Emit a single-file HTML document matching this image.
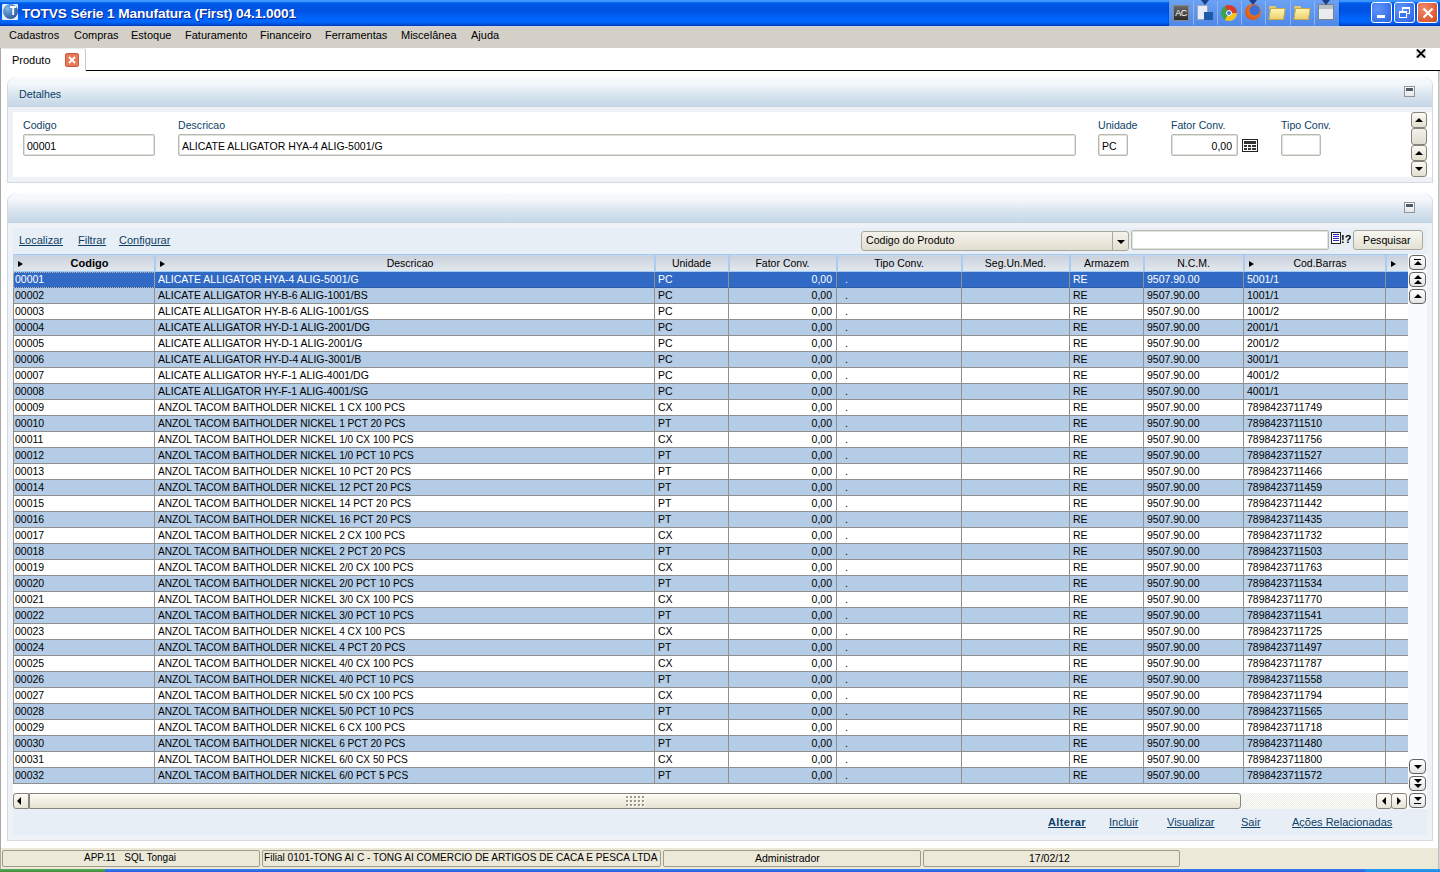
<!DOCTYPE html>
<html><head><meta charset="utf-8">
<style>
*{box-sizing:border-box;margin:0;padding:0}
html,body{width:1440px;height:872px;overflow:hidden;background:#fff;font-family:"Liberation Sans",sans-serif;font-size:11px;color:#000;position:relative}
.a{position:absolute}
/* title bar */
#title{left:0;top:0;width:1440px;height:26px;background:linear-gradient(to bottom,#3D95FF 0px,#3D95FF 1.5px,#0A6CF5 2.5px,#0058E6 4px,#0054E3 8px,#0055E5 12px,#005DF0 15px,#0066FF 19px,#0066FE 22px,#0052DA 24px,#003CB5 26px)}
#title .t{left:22px;top:6px;color:#fff;font-weight:bold;font-size:13.7px;letter-spacing:-0.12px;text-shadow:1px 1px 0 #0A1E8C;white-space:nowrap}
#menuline{left:0;top:26px;width:1440px;height:1px;background:#C9D2EA}
#menu{left:0;top:27px;width:1440px;height:21px;background:#D4D0C8}
#menu span{position:absolute;top:2px;white-space:nowrap;font-size:11px}
/* tab */
#tabbar{left:0;top:48px;width:1440px;height:23px;background:#fff}
#tabline{left:86px;top:70px;width:1354px;height:1px;background:#000}
#tab{left:1px;top:48px;width:85px;height:23px;background:#fff;border-top:1px solid #E8E8E8;border-right:1px solid #C8C8C8;border-top-right-radius:3px}
#lborder{left:0;top:48px;width:1px;height:821px;background:#A9A9A9}
#rborder{left:1438px;top:71px;width:2px;height:798px;background:linear-gradient(to right,#B4B4B4,#DCDCDC)}
.panel{background:#EEF2F7;border:1px solid #D3DAE2;border-top:none;border-radius:9px 9px 0 0}
.phead{left:0;top:0;right:0;height:30px;border-radius:9px 9px 0 0;background:linear-gradient(to bottom,#F9FBFD 0%,#F2F6FA 25%,#D8E4EF 60%,#C4D6E6 100%)}
.minbtn{width:11px;height:11px;border:1px solid #8E959C;background:linear-gradient(#FDFDFD,#E4E6E9)}
.minbtn::after{content:"";position:absolute;left:1px;top:1px;width:7px;height:2.5px;background:#505A68}
.lbl{color:#0D3F66;font-size:10.6px;white-space:nowrap}
.inp{background:#fff;border:1px solid #B9B9B3;border-radius:2px;box-shadow:inset 0 0 0 1px #E2E2DC}
.inp span{position:absolute;top:4.5px;white-space:nowrap;font-size:10.5px}
.gbtn{position:absolute;width:17px;height:15px;border:1px solid #626262;border-radius:4px;background:linear-gradient(#FFFFFF,#E4E4E4)}
.sbtn{width:16px;border:1px solid #85847C;border-radius:3px;background:linear-gradient(#FBFAF4,#E3E0D0)}
.tri-up{position:absolute;width:0;height:0;border-left:4px solid transparent;border-right:4px solid transparent;border-bottom:4px solid #000}
.tri-dn{position:absolute;width:0;height:0;border-left:4px solid transparent;border-right:4px solid transparent;border-top:4px solid #000}
.tri-l{position:absolute;width:0;height:0;border-top:4px solid transparent;border-bottom:4px solid transparent;border-right:4px solid #000}
.tri-r{position:absolute;width:0;height:0;border-top:4px solid transparent;border-bottom:4px solid transparent;border-left:4px solid #000}
.bar{position:absolute;height:2px;background:#000}
.link{color:#0D3F66;text-decoration:underline;white-space:nowrap;font-size:11px}
/* grid */
#gridhead{left:13px;top:254px;width:1395px;height:18px;border-top:1px solid #A9C6E4;border-bottom:1px solid #ABCBEC;border-left:1px solid #B8D6F0;background:linear-gradient(to bottom,#C0D8F0 0,#C0D8F0 1px,#CAD2DD 1px,#E2E6EC 15px,#D4EAFB 15px)}
.hcell{position:absolute;top:257px;height:14px;text-align:center;white-space:nowrap;font-size:10.5px}
.hcell.b{font-weight:bold;font-size:11px}
.harrow{position:absolute;top:261px;width:0;height:0;border-top:3.5px solid transparent;border-bottom:3.5px solid transparent;border-left:5px solid #000}
.hsep{position:absolute;top:255px;width:2px;height:16px;background:#A8CDF3}
#gridbody{left:13px;top:272px;width:1394px;height:521px;background:#fff}
.row{position:absolute;left:13px;width:1395px;height:16px;border-bottom:1px solid #8F8F8F;font-size:10.5px}
.row span{position:absolute;top:1px;white-space:nowrap}
.row span.r{text-align:right}
.row.alt{background:#B4CCE6}
.row.wht{background:#fff}
.row.sel{background:#316AC5;color:#fff;border-bottom-color:#2B5AA6}
.vline{position:absolute;width:1px;background:#8F8F8F}
.status{position:absolute;top:850px;height:17px;border:1px solid #A09C8C;border-radius:2px;background:#ECE9D8;font-size:10.5px;white-space:nowrap}
.status span{position:absolute;top:1px}
</style></head><body>

<!-- Title bar -->
<div id="title" class="a">
  <div class="a" style="left:2px;top:4px;width:16px;height:16px;background:#E6EEFA;border-radius:1px"></div>
  <div class="a" style="left:3px;top:4px;width:15px;height:15px;border-radius:50%;background:radial-gradient(circle at 30% 30%,#7DB8E8 0%,#4A80C0 45%,#24407E 100%)"></div>
  <svg class="a" style="left:9px;top:5px" width="8" height="11"><path d="M1 2H7M4.2 2V10" stroke="#fff" stroke-width="1.8"/></svg>
  <div class="a t">TOTVS Série 1 Manufatura (First) 04.1.0001</div>
  <!-- quick launch -->
  <div class="a" style="left:1169px;top:0;width:170px;height:26px;background:linear-gradient(#6CA2F4,#4F87E6);box-shadow:0 1px 2px rgba(0,0,0,.3)"></div>
  <div class="a" style="left:1193px;top:1px;width:1px;height:24px;background:#8FB4F2"></div>
<div class="a" style="left:1217px;top:1px;width:1px;height:24px;background:#8FB4F2"></div>
<div class="a" style="left:1241px;top:1px;width:1px;height:24px;background:#8FB4F2"></div>
<div class="a" style="left:1265px;top:1px;width:1px;height:24px;background:#8FB4F2"></div>
<div class="a" style="left:1290px;top:1px;width:1px;height:24px;background:#8FB4F2"></div>
<div class="a" style="left:1314px;top:1px;width:1px;height:24px;background:#8FB4F2"></div>
<div class="a" style="left:1173px;top:5px;width:16px;height:16px;background:linear-gradient(#6A6A6A,#2A2A2A);border:1px solid #888;color:#fff;font-size:9px;line-height:14px;text-align:center;letter-spacing:-0.5px">AC</div>
<div class="a" style="left:1197px;top:5px;width:11px;height:15px;background:#E8ECF4;border:1px solid #A0A8B8"></div><div class="a" style="left:1204px;top:12px;width:9px;height:8px;background:#1D5BA8"></div>
<div class="a" style="left:1221px;top:5px;width:16px;height:16px;border-radius:50%;background:conic-gradient(from -30deg,#DB3A2C 0 120deg,#F6C21C 120deg 240deg,#3DA24A 240deg 360deg)"></div><div class="a" style="left:1226px;top:10px;width:6px;height:6px;border-radius:50%;background:#3A7BE0;border:1px solid #fff"></div>
<div class="a" style="left:1245px;top:4px;width:16px;height:16px;border-radius:50%;background:radial-gradient(circle at 60% 40%,#3A6ED8 0 35%,#E8701E 40%,#C8401A 100%)"></div>
<div class="a" style="left:1269px;top:6px;width:7px;height:3px;background:#E8C860;border-radius:1px 1px 0 0"></div><div class="a" style="left:1269px;top:8px;width:16px;height:12px;background:linear-gradient(#FFF4B0,#EDD070);border:1px solid #C8A848;border-radius:1px;transform:skewX(-8deg)"></div>
<div class="a" style="left:1294px;top:6px;width:7px;height:3px;background:#E8C860;border-radius:1px 1px 0 0"></div><div class="a" style="left:1294px;top:8px;width:16px;height:12px;background:linear-gradient(#FFF4B0,#EDD070);border:1px solid #C8A848;border-radius:1px;transform:skewX(-8deg)"></div>
<div class="a" style="left:1318px;top:4px;width:16px;height:16px;background:linear-gradient(#B8C0C8 0 30%,#E8ECEF 30%);border:1px solid #7A8490"></div>
<div class="a" style="left:1201px;top:0;width:0;height:0;border-left:4px solid transparent;border-right:4px solid transparent;border-top:5px solid #1E3E88"></div>
<div class="a" style="left:1249px;top:0;width:0;height:0;border-left:4px solid transparent;border-right:4px solid transparent;border-top:5px solid #1E3E88"></div>
<div class="a" style="left:1322px;top:0;width:0;height:0;border-left:4px solid transparent;border-right:4px solid transparent;border-top:5px solid #1E3E88"></div>
  <!-- window buttons -->
  <div class="a" style="left:1371px;top:2px;width:21px;height:21px;border:1px solid #fff;border-radius:3px;background:radial-gradient(circle at 30% 30%,#5E94FA,#2A62E2)"><div class="a" style="left:5px;top:12px;width:8px;height:3px;background:#fff"></div></div>
  <div class="a" style="left:1394px;top:2px;width:21px;height:21px;border:1px solid #fff;border-radius:3px;background:radial-gradient(circle at 30% 30%,#5E94FA,#2A62E2)"><div class="a" style="left:7px;top:4px;width:8px;height:7px;border:1px solid #fff;border-top-width:2px"></div><div class="a" style="left:4px;top:8px;width:8px;height:7px;border:1px solid #fff;border-top-width:2px;background:#3D74EA"></div></div>
  <div class="a" style="left:1417px;top:2px;width:21px;height:21px;border:1px solid #fff;border-radius:3px;background:radial-gradient(circle at 30% 30%,#F08A6A,#D2471F)"><svg class="a" style="left:4px;top:4px" width="12" height="12"><path d="M1.5 1.5L10.5 10.5M10.5 1.5L1.5 10.5" stroke="#fff" stroke-width="2.2"/></svg></div>
</div>
<div id="menuline" class="a"></div>
<div id="menu" class="a">
  <span style="left:9px">Cadastros</span>
  <span style="left:74px">Compras</span>
  <span style="left:131px">Estoque</span>
  <span style="left:185px">Faturamento</span>
  <span style="left:260px">Financeiro</span>
  <span style="left:325px">Ferramentas</span>
  <span style="left:401px">Miscelânea</span>
  <span style="left:471px">Ajuda</span>
</div>

<!-- tab -->
<div id="tabbar" class="a"></div>
<div id="tab" class="a">
  <div class="a" style="left:11px;top:5px;font-size:11px">Produto</div>
  <div class="a" style="left:64px;top:4px;width:14px;height:14px;border:1px solid #C85A3A;border-radius:2px;background:#E8785A"><svg class="a" style="left:2px;top:2px" width="8" height="8"><path d="M1 1L7 7M7 1L1 7" stroke="#fff" stroke-width="1.8"/></svg></div>
</div>
<div id="tabline" class="a"></div>
<div class="a" style="left:0;top:70px;width:1px;height:1px;background:#000"></div>
<svg class="a" style="left:1416px;top:49px" width="10" height="9"><rect x="0" y="0" width="10" height="9" fill="#E4E4E4"/><path d="M1 0.5L9 8.5M9 0.5L1 8.5" stroke="#000" stroke-width="1.8"/></svg>
<div id="lborder" class="a"></div>
<div id="rborder" class="a"></div>

<!-- Detalhes panel -->
<div class="a panel" style="left:7px;top:77px;width:1426px;height:106px">
  <div class="a phead"></div>
  <div class="a lbl" style="left:11px;top:11px;font-size:10.7px">Detalhes</div>
  <div class="a minbtn" style="left:1396px;top:9px"></div>
  <div class="a" style="left:5px;top:35px;width:1419px;height:65px;background:#fff"></div>
</div>
<div class="a lbl" style="left:23px;top:119px">Codigo</div>
<div class="a lbl" style="left:178px;top:119px">Descricao</div>
<div class="a lbl" style="left:1098px;top:119px">Unidade</div>
<div class="a lbl" style="left:1171px;top:119px">Fator Conv.</div>
<div class="a lbl" style="left:1281px;top:119px">Tipo Conv.</div>
<div class="a inp" style="left:23px;top:134px;width:132px;height:22px"><span style="left:3px">00001</span></div>
<div class="a inp" style="left:178px;top:134px;width:898px;height:22px"><span style="left:3px">ALICATE ALLIGATOR HYA-4 ALIG-5001/G</span></div>
<div class="a inp" style="left:1098px;top:134px;width:30px;height:22px"><span style="left:3px">PC</span></div>
<div class="a inp" style="left:1171px;top:134px;width:67px;height:22px"><span style="right:5px">0,00</span></div>
<div class="a inp" style="left:1281px;top:134px;width:40px;height:22px"></div>
<!-- calculator icon -->
<svg class="a" style="left:1242px;top:139px" width="16" height="13"><rect x="0.5" y="0.5" width="15" height="12" fill="#fff" stroke="#222"/><rect x="2" y="2" width="12" height="3" fill="#333"/><g fill="#333"><rect x="2" y="6" width="3" height="2"/><rect x="6" y="6" width="3" height="2"/><rect x="10" y="6" width="4" height="2"/><rect x="2" y="9" width="3" height="2"/><rect x="6" y="9" width="3" height="2"/><rect x="10" y="9" width="4" height="2"/></g></svg>
<!-- detalhes scroll -->
<div class="a sbtn" style="left:1411px;top:112px;height:16px"><div class="tri-up" style="left:3px;top:5px"></div></div>
<div class="a sbtn" style="left:1411px;top:128px;height:17px;background:linear-gradient(#F2F0E8,#E0DED4)"></div>
<div class="a sbtn" style="left:1411px;top:145px;height:16px"><div class="tri-up" style="left:3px;top:5px"></div></div>
<div class="a sbtn" style="left:1411px;top:161px;height:16px"><div class="tri-dn" style="left:3px;top:5px"></div></div>

<!-- Grid panel -->
<div class="a panel" style="left:7px;top:193px;width:1426px;height:648px">
  <div class="a phead"></div>
  <div class="a minbtn" style="left:1396px;top:9px"></div>
  <div class="a" style="left:5px;top:35px;width:1414px;height:607px;background:#E8EEF6"></div>
</div>
<div class="a link" style="left:19px;top:234px">Localizar</div>
<div class="a link" style="left:78px;top:234px">Filtrar</div>
<div class="a link" style="left:119px;top:234px">Configurar</div>
<!-- combo -->
<div class="a" style="left:861px;top:231px;width:268px;height:20px;border:1px solid #A9A79C;border-radius:3px;background:linear-gradient(#F4F2EA,#E2DFD0)">
  <div class="a" style="left:4px;top:2px;font-size:10.6px;white-space:nowrap">Codigo do Produto</div>
  <div class="a" style="left:250px;top:0;width:1px;height:18px;background:#A9A79C"></div>
  <div class="tri-dn" style="left:255px;top:8px"></div>
</div>
<div class="a inp" style="left:1131px;top:230px;width:198px;height:20px"></div>
<!-- search icon -->
<svg class="a" style="left:1331px;top:232px" width="20" height="13" shape-rendering="crispEdges"><rect x="0.5" y="0.5" width="9" height="11" fill="#fff" stroke="#222"/><g stroke="#2828C8"><path d="M2 2.5H8M2 4.5H8M2 6.5H8M2 8.5H8"/></g><text x="10" y="11" font-family="Liberation Sans" font-weight="bold" font-size="11" fill="#000">!?</text></svg>
<div class="a" style="left:1353px;top:230px;width:70px;height:20px;border:1px solid #A9A79C;border-radius:3px;background:linear-gradient(#F7F6F0,#E4E1D3)"><div class="a" style="left:9px;top:3px;font-size:10.7px">Pesquisar</div></div>

<!-- grid -->
<div class="a" style="left:1407px;top:254px;width:20px;height:555px;background:#FAFBFD"></div>
<div id="gridbody" class="a"></div>
<div id="gridhead" class="a"></div>
<div class="hcell b" style="left:25px;width:129px">Codigo</div>
<div class="hcell" style="left:166px;width:488px">Descricao</div>
<div class="hcell" style="left:655px;width:73px">Unidade</div>
<div class="hcell" style="left:729px;width:107px">Fator Conv.</div>
<div class="hcell" style="left:837px;width:124px">Tipo Conv.</div>
<div class="hcell" style="left:962px;width:107px">Seg.Un.Med.</div>
<div class="hcell" style="left:1070px;width:73px">Armazem</div>
<div class="hcell" style="left:1144px;width:99px">N.C.M.</div>
<div class="hcell" style="left:1255px;width:130px">Cod.Barras</div>
<div class="hcell" style="left:1386px;width:21px"></div>
<div class="harrow" style="left:18px"></div>
<div class="harrow" style="left:160px"></div>
<div class="harrow" style="left:1249px"></div>
<div class="harrow" style="left:1391px"></div>
<div class="hsep" style="left:154px"></div>
<div class="hsep" style="left:654px"></div>
<div class="hsep" style="left:728px"></div>
<div class="hsep" style="left:836px"></div>
<div class="hsep" style="left:961px"></div>
<div class="hsep" style="left:1069px"></div>
<div class="hsep" style="left:1143px"></div>
<div class="hsep" style="left:1243px"></div>
<div class="hsep" style="left:1385px"></div>
<div class="row sel" style="top:272px"><span style="left:2px">00001</span><span style="left:145px">ALICATE ALLIGATOR HYA-4 ALIG-5001/G</span><span style="left:645px">PC</span><span class="r" style="left:716px;width:103px">0,00</span><span style="left:832px">.</span><span style="left:1060px">RE</span><span style="left:1134px">9507.90.00</span><span style="left:1234px">5001/1</span></div>
<div class="row alt" style="top:288px"><span style="left:2px">00002</span><span style="left:145px">ALICATE ALLIGATOR HY-B-6 ALIG-1001/BS</span><span style="left:645px">PC</span><span class="r" style="left:716px;width:103px">0,00</span><span style="left:832px">.</span><span style="left:1060px">RE</span><span style="left:1134px">9507.90.00</span><span style="left:1234px">1001/1</span></div>
<div class="row wht" style="top:304px"><span style="left:2px">00003</span><span style="left:145px">ALICATE ALLIGATOR HY-B-6 ALIG-1001/GS</span><span style="left:645px">PC</span><span class="r" style="left:716px;width:103px">0,00</span><span style="left:832px">.</span><span style="left:1060px">RE</span><span style="left:1134px">9507.90.00</span><span style="left:1234px">1001/2</span></div>
<div class="row alt" style="top:320px"><span style="left:2px">00004</span><span style="left:145px">ALICATE ALLIGATOR HY-D-1 ALIG-2001/DG</span><span style="left:645px">PC</span><span class="r" style="left:716px;width:103px">0,00</span><span style="left:832px">.</span><span style="left:1060px">RE</span><span style="left:1134px">9507.90.00</span><span style="left:1234px">2001/1</span></div>
<div class="row wht" style="top:336px"><span style="left:2px">00005</span><span style="left:145px">ALICATE ALLIGATOR HY-D-1 ALIG-2001/G</span><span style="left:645px">PC</span><span class="r" style="left:716px;width:103px">0,00</span><span style="left:832px">.</span><span style="left:1060px">RE</span><span style="left:1134px">9507.90.00</span><span style="left:1234px">2001/2</span></div>
<div class="row alt" style="top:352px"><span style="left:2px">00006</span><span style="left:145px">ALICATE ALLIGATOR HY-D-4 ALIG-3001/B</span><span style="left:645px">PC</span><span class="r" style="left:716px;width:103px">0,00</span><span style="left:832px">.</span><span style="left:1060px">RE</span><span style="left:1134px">9507.90.00</span><span style="left:1234px">3001/1</span></div>
<div class="row wht" style="top:368px"><span style="left:2px">00007</span><span style="left:145px">ALICATE ALLIGATOR HY-F-1 ALIG-4001/DG</span><span style="left:645px">PC</span><span class="r" style="left:716px;width:103px">0,00</span><span style="left:832px">.</span><span style="left:1060px">RE</span><span style="left:1134px">9507.90.00</span><span style="left:1234px">4001/2</span></div>
<div class="row alt" style="top:384px"><span style="left:2px">00008</span><span style="left:145px">ALICATE ALLIGATOR HY-F-1 ALIG-4001/SG</span><span style="left:645px">PC</span><span class="r" style="left:716px;width:103px">0,00</span><span style="left:832px">.</span><span style="left:1060px">RE</span><span style="left:1134px">9507.90.00</span><span style="left:1234px">4001/1</span></div>
<div class="row wht" style="top:400px"><span style="left:2px">00009</span><span style="left:145px;font-size:10.15px;top:1.6px">ANZOL TACOM BAITHOLDER NICKEL 1 CX 100 PCS</span><span style="left:645px">CX</span><span class="r" style="left:716px;width:103px">0,00</span><span style="left:832px">.</span><span style="left:1060px">RE</span><span style="left:1134px">9507.90.00</span><span style="left:1234px">7898423711749</span></div>
<div class="row alt" style="top:416px"><span style="left:2px">00010</span><span style="left:145px;font-size:10.15px;top:1.6px">ANZOL TACOM BAITHOLDER NICKEL 1 PCT 20 PCS</span><span style="left:645px">PT</span><span class="r" style="left:716px;width:103px">0,00</span><span style="left:832px">.</span><span style="left:1060px">RE</span><span style="left:1134px">9507.90.00</span><span style="left:1234px">7898423711510</span></div>
<div class="row wht" style="top:432px"><span style="left:2px">00011</span><span style="left:145px;font-size:10.15px;top:1.6px">ANZOL TACOM BAITHOLDER NICKEL 1/0 CX 100 PCS</span><span style="left:645px">CX</span><span class="r" style="left:716px;width:103px">0,00</span><span style="left:832px">.</span><span style="left:1060px">RE</span><span style="left:1134px">9507.90.00</span><span style="left:1234px">7898423711756</span></div>
<div class="row alt" style="top:448px"><span style="left:2px">00012</span><span style="left:145px;font-size:10.15px;top:1.6px">ANZOL TACOM BAITHOLDER NICKEL 1/0 PCT 10 PCS</span><span style="left:645px">PT</span><span class="r" style="left:716px;width:103px">0,00</span><span style="left:832px">.</span><span style="left:1060px">RE</span><span style="left:1134px">9507.90.00</span><span style="left:1234px">7898423711527</span></div>
<div class="row wht" style="top:464px"><span style="left:2px">00013</span><span style="left:145px;font-size:10.15px;top:1.6px">ANZOL TACOM BAITHOLDER NICKEL 10 PCT 20 PCS</span><span style="left:645px">PT</span><span class="r" style="left:716px;width:103px">0,00</span><span style="left:832px">.</span><span style="left:1060px">RE</span><span style="left:1134px">9507.90.00</span><span style="left:1234px">7898423711466</span></div>
<div class="row alt" style="top:480px"><span style="left:2px">00014</span><span style="left:145px;font-size:10.15px;top:1.6px">ANZOL TACOM BAITHOLDER NICKEL 12 PCT 20 PCS</span><span style="left:645px">PT</span><span class="r" style="left:716px;width:103px">0,00</span><span style="left:832px">.</span><span style="left:1060px">RE</span><span style="left:1134px">9507.90.00</span><span style="left:1234px">7898423711459</span></div>
<div class="row wht" style="top:496px"><span style="left:2px">00015</span><span style="left:145px;font-size:10.15px;top:1.6px">ANZOL TACOM BAITHOLDER NICKEL 14 PCT 20 PCS</span><span style="left:645px">PT</span><span class="r" style="left:716px;width:103px">0,00</span><span style="left:832px">.</span><span style="left:1060px">RE</span><span style="left:1134px">9507.90.00</span><span style="left:1234px">7898423711442</span></div>
<div class="row alt" style="top:512px"><span style="left:2px">00016</span><span style="left:145px;font-size:10.15px;top:1.6px">ANZOL TACOM BAITHOLDER NICKEL 16 PCT 20 PCS</span><span style="left:645px">PT</span><span class="r" style="left:716px;width:103px">0,00</span><span style="left:832px">.</span><span style="left:1060px">RE</span><span style="left:1134px">9507.90.00</span><span style="left:1234px">7898423711435</span></div>
<div class="row wht" style="top:528px"><span style="left:2px">00017</span><span style="left:145px;font-size:10.15px;top:1.6px">ANZOL TACOM BAITHOLDER NICKEL 2 CX 100 PCS</span><span style="left:645px">CX</span><span class="r" style="left:716px;width:103px">0,00</span><span style="left:832px">.</span><span style="left:1060px">RE</span><span style="left:1134px">9507.90.00</span><span style="left:1234px">7898423711732</span></div>
<div class="row alt" style="top:544px"><span style="left:2px">00018</span><span style="left:145px;font-size:10.15px;top:1.6px">ANZOL TACOM BAITHOLDER NICKEL 2 PCT 20 PCS</span><span style="left:645px">PT</span><span class="r" style="left:716px;width:103px">0,00</span><span style="left:832px">.</span><span style="left:1060px">RE</span><span style="left:1134px">9507.90.00</span><span style="left:1234px">7898423711503</span></div>
<div class="row wht" style="top:560px"><span style="left:2px">00019</span><span style="left:145px;font-size:10.15px;top:1.6px">ANZOL TACOM BAITHOLDER NICKEL 2/0 CX 100 PCS</span><span style="left:645px">CX</span><span class="r" style="left:716px;width:103px">0,00</span><span style="left:832px">.</span><span style="left:1060px">RE</span><span style="left:1134px">9507.90.00</span><span style="left:1234px">7898423711763</span></div>
<div class="row alt" style="top:576px"><span style="left:2px">00020</span><span style="left:145px;font-size:10.15px;top:1.6px">ANZOL TACOM BAITHOLDER NICKEL 2/0 PCT 10 PCS</span><span style="left:645px">PT</span><span class="r" style="left:716px;width:103px">0,00</span><span style="left:832px">.</span><span style="left:1060px">RE</span><span style="left:1134px">9507.90.00</span><span style="left:1234px">7898423711534</span></div>
<div class="row wht" style="top:592px"><span style="left:2px">00021</span><span style="left:145px;font-size:10.15px;top:1.6px">ANZOL TACOM BAITHOLDER NICKEL 3/0 CX 100 PCS</span><span style="left:645px">CX</span><span class="r" style="left:716px;width:103px">0,00</span><span style="left:832px">.</span><span style="left:1060px">RE</span><span style="left:1134px">9507.90.00</span><span style="left:1234px">7898423711770</span></div>
<div class="row alt" style="top:608px"><span style="left:2px">00022</span><span style="left:145px;font-size:10.15px;top:1.6px">ANZOL TACOM BAITHOLDER NICKEL 3/0 PCT 10 PCS</span><span style="left:645px">PT</span><span class="r" style="left:716px;width:103px">0,00</span><span style="left:832px">.</span><span style="left:1060px">RE</span><span style="left:1134px">9507.90.00</span><span style="left:1234px">7898423711541</span></div>
<div class="row wht" style="top:624px"><span style="left:2px">00023</span><span style="left:145px;font-size:10.15px;top:1.6px">ANZOL TACOM BAITHOLDER NICKEL 4 CX 100 PCS</span><span style="left:645px">CX</span><span class="r" style="left:716px;width:103px">0,00</span><span style="left:832px">.</span><span style="left:1060px">RE</span><span style="left:1134px">9507.90.00</span><span style="left:1234px">7898423711725</span></div>
<div class="row alt" style="top:640px"><span style="left:2px">00024</span><span style="left:145px;font-size:10.15px;top:1.6px">ANZOL TACOM BAITHOLDER NICKEL 4 PCT 20 PCS</span><span style="left:645px">PT</span><span class="r" style="left:716px;width:103px">0,00</span><span style="left:832px">.</span><span style="left:1060px">RE</span><span style="left:1134px">9507.90.00</span><span style="left:1234px">7898423711497</span></div>
<div class="row wht" style="top:656px"><span style="left:2px">00025</span><span style="left:145px;font-size:10.15px;top:1.6px">ANZOL TACOM BAITHOLDER NICKEL 4/0 CX 100 PCS</span><span style="left:645px">CX</span><span class="r" style="left:716px;width:103px">0,00</span><span style="left:832px">.</span><span style="left:1060px">RE</span><span style="left:1134px">9507.90.00</span><span style="left:1234px">7898423711787</span></div>
<div class="row alt" style="top:672px"><span style="left:2px">00026</span><span style="left:145px;font-size:10.15px;top:1.6px">ANZOL TACOM BAITHOLDER NICKEL 4/0 PCT 10 PCS</span><span style="left:645px">PT</span><span class="r" style="left:716px;width:103px">0,00</span><span style="left:832px">.</span><span style="left:1060px">RE</span><span style="left:1134px">9507.90.00</span><span style="left:1234px">7898423711558</span></div>
<div class="row wht" style="top:688px"><span style="left:2px">00027</span><span style="left:145px;font-size:10.15px;top:1.6px">ANZOL TACOM BAITHOLDER NICKEL 5/0 CX 100 PCS</span><span style="left:645px">CX</span><span class="r" style="left:716px;width:103px">0,00</span><span style="left:832px">.</span><span style="left:1060px">RE</span><span style="left:1134px">9507.90.00</span><span style="left:1234px">7898423711794</span></div>
<div class="row alt" style="top:704px"><span style="left:2px">00028</span><span style="left:145px;font-size:10.15px;top:1.6px">ANZOL TACOM BAITHOLDER NICKEL 5/0 PCT 10 PCS</span><span style="left:645px">PT</span><span class="r" style="left:716px;width:103px">0,00</span><span style="left:832px">.</span><span style="left:1060px">RE</span><span style="left:1134px">9507.90.00</span><span style="left:1234px">7898423711565</span></div>
<div class="row wht" style="top:720px"><span style="left:2px">00029</span><span style="left:145px;font-size:10.15px;top:1.6px">ANZOL TACOM BAITHOLDER NICKEL 6 CX 100 PCS</span><span style="left:645px">CX</span><span class="r" style="left:716px;width:103px">0,00</span><span style="left:832px">.</span><span style="left:1060px">RE</span><span style="left:1134px">9507.90.00</span><span style="left:1234px">7898423711718</span></div>
<div class="row alt" style="top:736px"><span style="left:2px">00030</span><span style="left:145px;font-size:10.15px;top:1.6px">ANZOL TACOM BAITHOLDER NICKEL 6 PCT 20 PCS</span><span style="left:645px">PT</span><span class="r" style="left:716px;width:103px">0,00</span><span style="left:832px">.</span><span style="left:1060px">RE</span><span style="left:1134px">9507.90.00</span><span style="left:1234px">7898423711480</span></div>
<div class="row wht" style="top:752px"><span style="left:2px">00031</span><span style="left:145px;font-size:10.15px;top:1.6px">ANZOL TACOM BAITHOLDER NICKEL 6/0 CX 50 PCS</span><span style="left:645px">CX</span><span class="r" style="left:716px;width:103px">0,00</span><span style="left:832px">.</span><span style="left:1060px">RE</span><span style="left:1134px">9507.90.00</span><span style="left:1234px">7898423711800</span></div>
<div class="row alt" style="top:768px"><span style="left:2px">00032</span><span style="left:145px;font-size:10.15px;top:1.6px">ANZOL TACOM BAITHOLDER NICKEL 6/0 PCT 5 PCS</span><span style="left:645px">PT</span><span class="r" style="left:716px;width:103px">0,00</span><span style="left:832px">.</span><span style="left:1060px">RE</span><span style="left:1134px">9507.90.00</span><span style="left:1234px">7898423711572</span></div>
<div class="vline" style="left:154px;top:272px;height:512px"></div>
<div class="vline" style="left:654px;top:272px;height:512px"></div>
<div class="vline" style="left:728px;top:272px;height:512px"></div>
<div class="vline" style="left:836px;top:272px;height:512px"></div>
<div class="vline" style="left:961px;top:272px;height:512px"></div>
<div class="vline" style="left:1069px;top:272px;height:512px"></div>
<div class="vline" style="left:1143px;top:272px;height:512px"></div>
<div class="vline" style="left:1243px;top:272px;height:512px"></div>
<div class="vline" style="left:1385px;top:272px;height:512px"></div>
<div class="a" style="left:13px;top:272px;width:1px;height:512px;background:#8F8F8F"></div>
<!-- focus rect on first cell -->
<div class="a" style="left:13px;top:272px;width:142px;height:16px;border:1px dotted #B4B4B4"></div>

<!-- vertical grid scroll buttons -->
<div class="gbtn" style="left:1409px;top:255px"><div class="bar" style="left:4px;top:3px;width:7px;height:1px"></div><div class="tri-up" style="left:3.5px;top:5px"></div></div>
<div class="gbtn" style="left:1409px;top:272px"><div class="tri-up" style="left:3.5px;top:2px"></div><div class="tri-up" style="left:3.5px;top:7px"></div></div>
<div class="gbtn" style="left:1409px;top:289px"><div class="tri-up" style="left:3.5px;top:4px"></div></div>
<div class="gbtn" style="left:1409px;top:759px"><div class="tri-dn" style="left:3.5px;top:5px"></div></div>
<div class="gbtn" style="left:1409px;top:776px"><div class="tri-dn" style="left:3.5px;top:2px"></div><div class="tri-dn" style="left:3.5px;top:7px"></div></div>
<div class="gbtn" style="left:1409px;top:793px"><div class="tri-dn" style="left:3.5px;top:3px"></div><div class="bar" style="left:4px;top:9px;width:7px;height:1px"></div></div>

<!-- horizontal scrollbar -->
<div class="a" style="left:13px;top:793px;width:1394px;height:16px;background:repeating-conic-gradient(#F0F0EA 0 25%,#FAFAF6 0 50%) 0 0/2px 2px"></div>
<div class="a" style="left:13px;top:793px;width:16px;height:16px;border:1px solid #85847C;border-radius:3px 0 0 3px;background:linear-gradient(#FDFCF6,#E6E3D6)"><div class="tri-l" style="left:3px;top:3px"></div></div>
<div class="a" style="left:29px;top:793px;width:1212px;height:16px;border:1px solid #85847C;border-radius:0 3px 3px 0;background:linear-gradient(#FDFCF4,#E6E2D2)"></div>
<svg class="a" style="left:626px;top:796px" width="20" height="12" shape-rendering="crispEdges"><rect x="0" y="0" width="2" height="2" fill="#9C998C"/><rect x="1" y="1" width="2" height="2" fill="#FFFFFF" fill-opacity=".9"/><rect x="0" y="0" width="2" height="2" fill="#9C998C" clip-path="none" transform="" /><rect x="4" y="0" width="2" height="2" fill="#9C998C"/><rect x="5" y="1" width="2" height="2" fill="#FFFFFF" fill-opacity=".9"/><rect x="4" y="0" width="2" height="2" fill="#9C998C" clip-path="none" transform="" /><rect x="8" y="0" width="2" height="2" fill="#9C998C"/><rect x="9" y="1" width="2" height="2" fill="#FFFFFF" fill-opacity=".9"/><rect x="8" y="0" width="2" height="2" fill="#9C998C" clip-path="none" transform="" /><rect x="12" y="0" width="2" height="2" fill="#9C998C"/><rect x="13" y="1" width="2" height="2" fill="#FFFFFF" fill-opacity=".9"/><rect x="12" y="0" width="2" height="2" fill="#9C998C" clip-path="none" transform="" /><rect x="16" y="0" width="2" height="2" fill="#9C998C"/><rect x="17" y="1" width="2" height="2" fill="#FFFFFF" fill-opacity=".9"/><rect x="16" y="0" width="2" height="2" fill="#9C998C" clip-path="none" transform="" /><rect x="0" y="4" width="2" height="2" fill="#9C998C"/><rect x="1" y="5" width="2" height="2" fill="#FFFFFF" fill-opacity=".9"/><rect x="0" y="4" width="2" height="2" fill="#9C998C" clip-path="none" transform="" /><rect x="4" y="4" width="2" height="2" fill="#9C998C"/><rect x="5" y="5" width="2" height="2" fill="#FFFFFF" fill-opacity=".9"/><rect x="4" y="4" width="2" height="2" fill="#9C998C" clip-path="none" transform="" /><rect x="8" y="4" width="2" height="2" fill="#9C998C"/><rect x="9" y="5" width="2" height="2" fill="#FFFFFF" fill-opacity=".9"/><rect x="8" y="4" width="2" height="2" fill="#9C998C" clip-path="none" transform="" /><rect x="12" y="4" width="2" height="2" fill="#9C998C"/><rect x="13" y="5" width="2" height="2" fill="#FFFFFF" fill-opacity=".9"/><rect x="12" y="4" width="2" height="2" fill="#9C998C" clip-path="none" transform="" /><rect x="16" y="4" width="2" height="2" fill="#9C998C"/><rect x="17" y="5" width="2" height="2" fill="#FFFFFF" fill-opacity=".9"/><rect x="16" y="4" width="2" height="2" fill="#9C998C" clip-path="none" transform="" /><rect x="0" y="8" width="2" height="2" fill="#9C998C"/><rect x="1" y="9" width="2" height="2" fill="#FFFFFF" fill-opacity=".9"/><rect x="0" y="8" width="2" height="2" fill="#9C998C" clip-path="none" transform="" /><rect x="4" y="8" width="2" height="2" fill="#9C998C"/><rect x="5" y="9" width="2" height="2" fill="#FFFFFF" fill-opacity=".9"/><rect x="4" y="8" width="2" height="2" fill="#9C998C" clip-path="none" transform="" /><rect x="8" y="8" width="2" height="2" fill="#9C998C"/><rect x="9" y="9" width="2" height="2" fill="#FFFFFF" fill-opacity=".9"/><rect x="8" y="8" width="2" height="2" fill="#9C998C" clip-path="none" transform="" /><rect x="12" y="8" width="2" height="2" fill="#9C998C"/><rect x="13" y="9" width="2" height="2" fill="#FFFFFF" fill-opacity=".9"/><rect x="12" y="8" width="2" height="2" fill="#9C998C" clip-path="none" transform="" /><rect x="16" y="8" width="2" height="2" fill="#9C998C"/><rect x="17" y="9" width="2" height="2" fill="#FFFFFF" fill-opacity=".9"/><rect x="16" y="8" width="2" height="2" fill="#9C998C" clip-path="none" transform="" /></svg>
<div class="a" style="left:1376px;top:793px;width:16px;height:16px;border:1px solid #85847C;border-radius:3px;background:linear-gradient(#FDFCF6,#E6E3D6)"><div class="tri-l" style="left:5px;top:3px"></div></div>
<div class="a" style="left:1391px;top:793px;width:16px;height:16px;border:1px solid #85847C;border-radius:3px;background:linear-gradient(#FDFCF6,#E6E3D6)"><div class="tri-r" style="left:5px;top:3px"></div></div>

<!-- action links -->
<div class="a link" style="left:1048px;top:816px;font-weight:bold;letter-spacing:0.35px">Alterar</div>
<div class="a link" style="left:1109px;top:816px">Incluir</div>
<div class="a link" style="left:1167px;top:816px">Visualizar</div>
<div class="a link" style="left:1241px;top:816px">Sair</div>
<div class="a link" style="left:1292px;top:816px">Ações Relacionadas</div>

<!-- status bar -->
<div class="a" style="left:1px;top:848px;width:1437px;height:21px;background:#ECE9D8"></div>
<div class="status" style="left:2px;width:258px"><span style="left:81px;font-size:10px">APP.11&nbsp;&nbsp;&nbsp;SQL Tongai</span></div>
<div class="status" style="left:262px;width:399px"><span style="left:1px;font-size:10.1px">Filial 0101-TONG AI C - TONG AI COMERCIO DE ARTIGOS DE CACA E PESCA LTDA</span></div>
<div class="status" style="left:663px;width:258px"><span style="left:91px">Administrador</span></div>
<div class="status" style="left:923px;width:257px"><span style="left:105px">17/02/12</span></div>

<!-- taskbar -->
<div class="a" style="left:0;top:869px;width:1440px;height:3px;background:linear-gradient(#3C81F3,#245EDB)"></div>
<div class="a" style="left:0;top:869px;width:105px;height:3px;background:linear-gradient(#5AAE5A,#3C8C3C)"></div>
<div class="a" style="left:1365px;top:869px;width:75px;height:3px;background:linear-gradient(#2A9CF0,#1B8AE6)"></div>
</body></html>
